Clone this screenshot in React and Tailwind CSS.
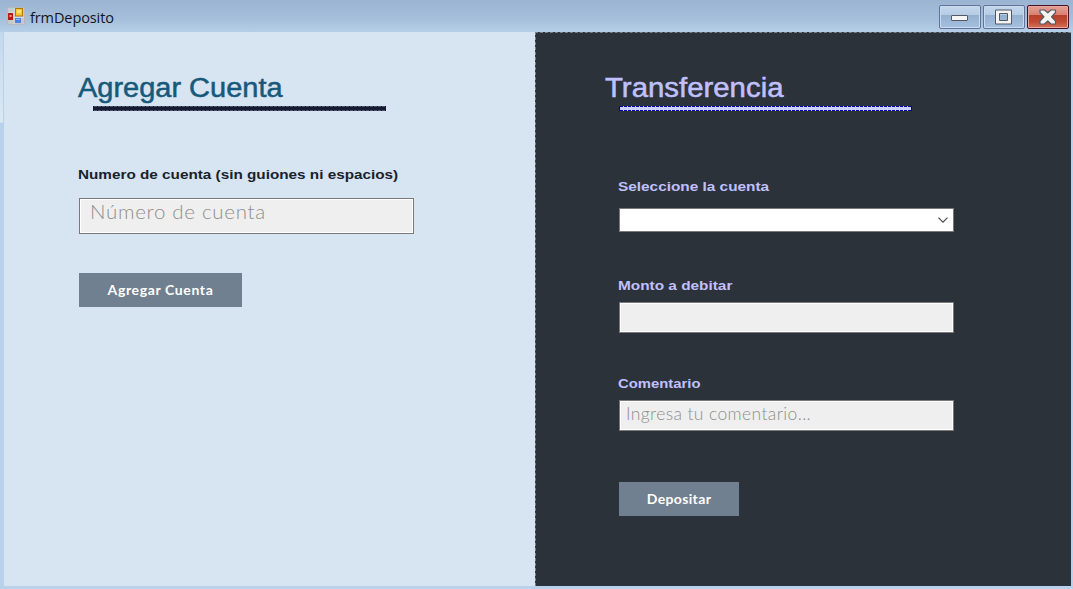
import React from "react";

function FormIcon() {
  return (
    <svg width="18" height="18" viewBox="0 0 18 18" className="shrink-0">
      <rect x=".5" y=".5" width="17" height="17" fill="#c6c9cf" stroke="#b9b9bb" />
      <path d="M1 5.500H7M7 1V17M7 10.500H17" stroke="#d6dce3" />
      <rect x="1" y="6" width="5" height="7" fill="#b71c12" />
      <rect x="2.5" y="8" width="2" height="2" fill="#f0a090" />
      <rect x="8.5" y="1.5" width="7" height="7.500" fill="#fbc42c" stroke="#b07a08" />
      <rect x="10" y="3" width="4" height="3" fill="#ffe27a" />
      <rect x="8" y="11" width="6" height="5" fill="#4c84d8" />
      <rect x="9" y="12" width="4" height="1" fill="#92bdf4" />
    </svg>
  );
}

function WindowButtons() {
  const base = "flex h-6 w-[42px] items-center justify-center rounded-[2px] border";
  const blue =
    " border-[#62729a] bg-[linear-gradient(#c3d7ec_0%,#b5cce5_42%,#94b0cf_43%,#a6c1df_100%)] shadow-[inset_0_0_0_1px_#c9dcef]";
  return (
    <div className="flex gap-0.5">
      <div className={base + blue}>
        <svg width="18" height="8" viewBox="0 0 18 8" className="mt-0.5">
          <rect x=".5" y="1.5" width="16" height="5" rx=".5" fill="#f5f5f4" stroke="#535766" />
        </svg>
      </div>
      <div className={base + blue}>
        <svg width="18" height="16" viewBox="0 0 18 16">
          <path
            d="M.5 1H16.500V15H.5ZM4.500 4.500V11.500H12.500V4.500Z"
            fill="#f3f3f2"
            fillRule="evenodd"
            stroke="#535766"
          />
        </svg>
      </div>
      <div
        className={
          base +
          " border-[#4b1029] bg-[linear-gradient(#e5a096_0%,#d68072_42%,#b8412b_43%,#c04a32_70%,#d4745c_100%)] shadow-[inset_0_0_0_1px_#e7a89c]"
        }
      >
        <svg width="18" height="16" viewBox="0 0 18 16">
          <path
            d="M1 1H5.500L8.800 3.800L12 1H16.500V3.500L12.500 7.800L16.500 12V15H12L8.800 12L5.500 15H1V12L5 7.800L1 3.500Z"
            fill="#f5f4f3"
            stroke="#565966"
            strokeWidth="1.200"
            strokeLinejoin="round"
          />
        </svg>
      </div>
    </div>
  );
}

function Heading({ className, children }) {
  return (
    <h1
      className={
        "h-8 w-max origin-left whitespace-nowrap font-['Liberation_Sans',sans-serif] text-[27px] leading-8 [-webkit-text-stroke:0.5px_currentColor] " +
        className
      }
    >
      {children}
    </h1>
  );
}

function Label({ className, children }) {
  return (
    <label
      className={
        "-ml-px block h-5 w-max origin-left whitespace-nowrap font-['Liberation_Sans',sans-serif] text-[13.500px] font-bold leading-5 " +
        className
      }
    >
      {children}
    </label>
  );
}

function Field({ className, children }) {
  return (
    <div
      className={
        "flex w-[335px] border border-[#7a7a7a] bg-[#efefef] font-['Lato',sans-serif] font-light text-[#8e8e8e] shadow-[inset_0_0_0_1px_#ffffff] " +
        className
      }
    >
      {children}
    </div>
  );
}

function Button({ className, children }) {
  return (
    <button
      className={
        "flex h-[34px] items-center justify-center whitespace-nowrap bg-[#708090] pb-0.5 font-['Lato',sans-serif] text-[14px] font-bold text-white " +
        className
      }
    >
      {children}
    </button>
  );
}

// Solid bar with one-pixel dashed edges above and below.
function Rule({ bar, dash }) {
  return (
    <div className={"mt-0.5 flex h-[5px] w-[293px] flex-col justify-between " + bar}>
      <div className={"h-px " + dash} />
      <div className={"h-px " + dash} />
    </div>
  );
}

export default function App() {
  return (
    <div className="flex h-[589px] w-[1073px] flex-col overflow-hidden bg-[#b9d1ea]">
      <header className="flex h-8 shrink-0 items-center justify-between bg-[linear-gradient(#9bb4d1,#a6c0dc_60%,#b5cfe9)] pb-px pl-[7px] pr-1">
        <div className="flex items-center gap-[5px]">
          <FormIcon />
          <span className="mt-[5px] font-['Open_Sans',sans-serif] text-[14.500px] leading-5 tracking-[-0.100px] text-[#10151c]">
            frmDeposito
          </span>
        </div>
        <div className="mt-[3px]">
          <WindowButtons />
        </div>
      </header>
      <main className="flex h-[554px] shrink-0">
        <div className="w-1 shrink-0 bg-[linear-gradient(to_right,transparent_3px,#b9d1ea_3px),linear-gradient(#c4d8ec,#dce9f5_90px,#b9d1ea_91px)]" />
        <section className="w-[531px] shrink-0 bg-[#d7e4f2] pl-[75px] pt-10">
          <Heading className="-ml-px scale-x-[1.073] text-[#17597a]">Agregar Cuenta</Heading>
          <div className="ml-[14px]">
            <Rule
              bar="bg-[#171b30]"
              dash="bg-[repeating-linear-gradient(to_right,#171b30_0px,#171b30_1px,#4a5472_1px,#4a5472_4px)]"
            />
          </div>
          <Label className="mt-[54px] scale-x-[1.132] text-[#17222d]">
            Numero de cuenta (sin guiones ni espacios)
          </Label>
          <Field className="mt-[13px] h-9 pl-2.5 text-[20.500px] leading-[25px] tracking-[0.700px]">
            Número de cuenta
          </Field>
          <Button className="mt-[39px] w-[163px] tracking-[0.620px]">Agregar Cuenta</Button>
        </section>
        <section className="w-[536px] shrink-0 border-l border-t border-dashed border-[#74808a] bg-[#2c323a] pl-[83px] pt-[39px]">
          <Heading className="-ml-[14px] scale-x-[1.088] text-[#c0c0ff]">Transferencia</Heading>
          <Rule
            bar="border-x border-[#00009c] bg-[#d0d0ff]"
            dash="bg-[repeating-linear-gradient(to_right,#00009c_0px,#00009c_3px,#d0d0ff_3px,#d0d0ff_4px)]"
          />
          <Label className="mt-[66px] scale-x-[1.138] text-[#c0c0ff]">Seleccione la cuenta</Label>
          <div className="mt-[11px] flex h-6 w-[335px] items-center justify-end border border-[#7a7a7a] bg-white pr-[5px]">
            <svg width="10" height="6" viewBox="0 0 10 6">
              <path d="M.5 .7L5 5.200L9.500 .7" fill="none" stroke="#444" strokeWidth="1.100" />
            </svg>
          </div>
          <Label className="mt-11 scale-x-[1.138] text-[#c0c0ff]">Monto a debitar</Label>
          <Field className="mt-1.5 h-[31px]" />
          <Label className="mt-[41px] scale-x-[1.100] text-[#c0c0ff]">Comentario</Label>
          <Field className="mt-1.5 h-[31px] pl-[6px] text-[17.500px] leading-[26px] tracking-[0.380px]">
            Ingresa tu comentario...
          </Field>
          <Button className="mt-[51px] w-[120px] tracking-[0.350px]">Depositar</Button>
        </section>
      </main>
    </div>
  );
}
